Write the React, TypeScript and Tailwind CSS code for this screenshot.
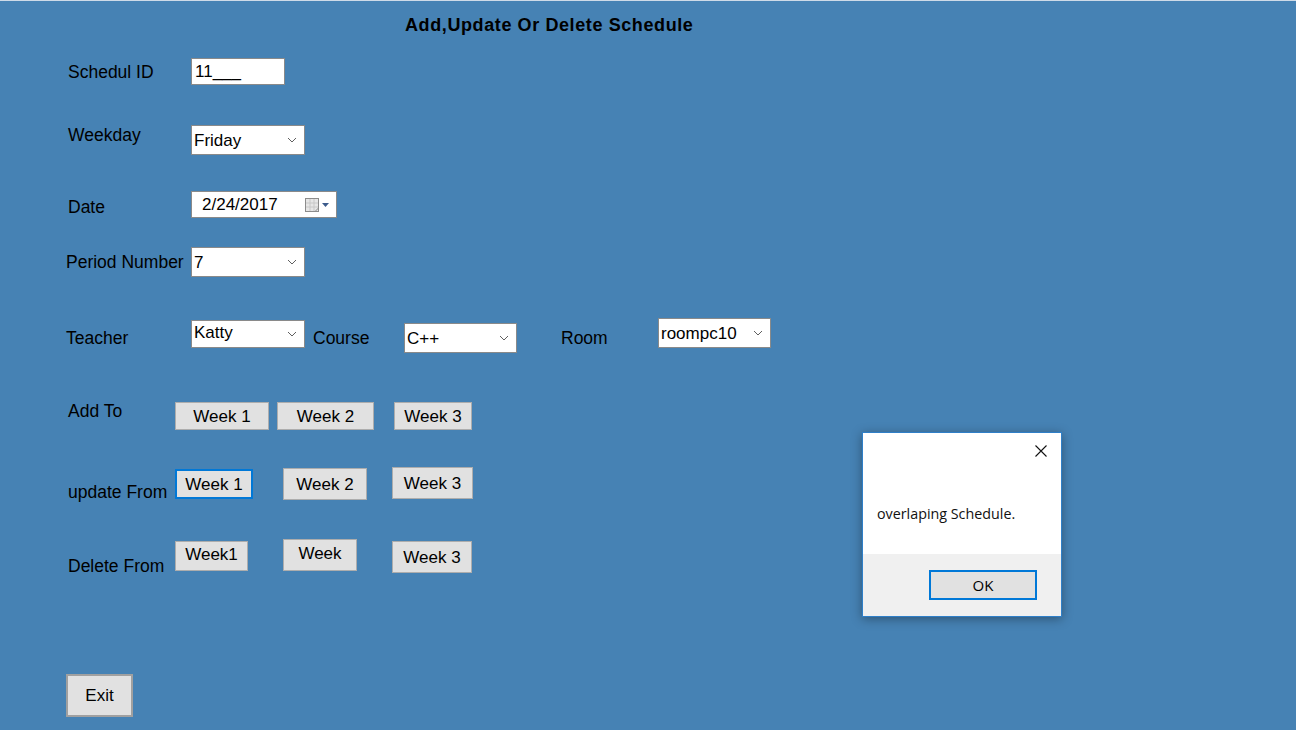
import React from 'react';

const font = { fontFamily: '"Liberation Sans", Arial, sans-serif' };

function Chevron() {
  return (
    <svg width="10" height="6" viewBox="0 0 10 6" className="shrink-0 self-center">
      <path d="M1 1 L5 5 L9 1" fill="none" stroke="#606060" strokeWidth="1" />
    </svg>
  );
}

function Combo({ value, w, h = 30, top = false, className = '' }: { value: string; w: number; h?: number; top?: boolean; className?: string }) {
  return (
    <div
      className={`flex items-center justify-between bg-white border border-[#8a8a8a] pl-[2px] pr-[7px] text-[17px] leading-none text-black ${className}`}
      style={{ width: w, height: h }}
    >
      <span className={top ? 'self-start pt-[3px]' : ''}>{value}</span>
      <Chevron />
    </div>
  );
}

function Btn({ label, w, h, focused = false, className = '' }: { label: string; w: number; h: number; focused?: boolean; className?: string }) {
  return (
    <div
      className={`flex items-center justify-center bg-[#e1e1e1] text-[17px] leading-none text-black ${
        focused ? 'border-2 border-[#0078d7]' : 'border border-[#adadad]'
      } ${className}`}
      style={{ width: w, height: h }}
    >
      {label}
    </div>
  );
}

const label = 'text-[17.5px] leading-5 text-black whitespace-nowrap';

export default function App() {
  return (
    <div className="relative w-[1296px] h-[730px] overflow-hidden bg-[#4682b4] border-t border-[#cfdbe8]" style={font}>
      {/* Title */}
      <div className="h-[57px] pt-[14px] pl-[405px] text-[18px] tracking-[0.6px] font-bold text-black leading-5">
        Add,Update Or Delete Schedule
      </div>

      {/* Schedul ID */}
      <div className="flex h-[67px] items-start">
        <span className={`ml-[68px] w-[123px] mt-[4px] ${label}`}>Schedul ID</span>
        <div className="w-[94px] h-[27px] bg-white border border-[#8a8a8a] pl-[3px] flex items-center text-[17px] leading-none text-black">
          11___
        </div>
      </div>

      {/* Weekday */}
      <div className="flex h-[66px] items-start">
        <span className={`ml-[68px] w-[123px] ${label}`}>Weekday</span>
        <Combo value="Friday" w={114} h={30} />
      </div>

      {/* Date */}
      <div className="flex h-[56px] items-start">
        <span className={`ml-[68px] w-[123px] mt-[6px] ${label}`}>Date</span>
        <div className="flex items-center justify-between w-[146px] h-[27px] bg-white border border-[#8a8a8a] pl-[10px] pr-[5px] text-[17px] leading-none text-black">
          <span>2/24/2017</span>
          <svg width="27" height="16" viewBox="0 0 27 16">
            <rect x="1.5" y="1.5" width="13" height="13" fill="#e6e6e6" stroke="#8c8c8c" />
            <path d="M6 2 V14 M10 2 V14 M2 6 H14 M2 10 H14" stroke="#c8c8c8" strokeWidth="1" />
            <path d="M14.5 11 L11 14.5" stroke="#8c8c8c" />
            <path d="M18 6 L25 6 L21.5 10 Z" fill="#3c5b8c" />
          </svg>
        </div>
      </div>

      {/* Period Number */}
      <div className="flex h-[71px] items-start">
        <span className={`ml-[66px] w-[125px] mt-[5px] ${label}`}>Period Number</span>
        <Combo value="7" w={114} h={30} />
      </div>

      {/* Teacher / Course / Room */}
      <div className="flex h-[83px] items-start">
        <span className={`ml-[66px] w-[125px] mt-[10px] ${label}`}>Teacher</span>
        <Combo value="Katty" w={114} h={28} top className="mt-[2px]" />
        <span className={`ml-[8px] w-[91px] mt-[10px] ${label}`}>Course</span>
        <Combo value="C++" w={113} h={30} className="mt-[5px]" />
        <span className={`ml-[44px] w-[97px] mt-[10px] ${label}`}>Room</span>
        <Combo value="roompc10" w={113} h={30} />
      </div>

      {/* Add To */}
      <div className="flex h-[66px] items-start">
        <span className={`ml-[68px] w-[107px] ${label}`}>Add To</span>
        <Btn label="Week 1" w={94} h={28} className="mt-[1px]" />
        <Btn label="Week 2" w={97} h={28} className="mt-[1px] ml-[8px]" />
        <Btn label="Week 3" w={78} h={28} className="mt-[1px] ml-[20px]" />
      </div>

      {/* update From */}
      <div className="flex h-[72px] items-start">
        <span className={`ml-[68px] w-[107px] mt-[15px] ${label}`}>update From</span>
        <Btn label="Week 1" w={78} h={30} focused className="mt-[2px]" />
        <Btn label="Week 2" w={84} h={32} className="mt-[1px] ml-[30px]" />
        <Btn label="Week 3" w={81} h={32} className="ml-[25px]" />
      </div>

      {/* Delete From */}
      <div className="flex h-[135px] items-start">
        <span className={`ml-[68px] w-[107px] mt-[17px] ${label}`}>Delete From</span>
        <Btn label="Week1" w={73} h={30} className="mt-[2px] !items-start pt-[4px]" />
        <Btn label="Week" w={74} h={32} className="ml-[35px] !items-start pt-[5px]" />
        <Btn label="Week 3" w={80} h={32} className="mt-[2px] ml-[35px]" />
      </div>

      {/* Exit */}
      <div className="flex">
        <Btn label="Exit" w={67} h={43} className="ml-[66px] !border-[#a0a0a0] border-2" />
      </div>

      {/* Message box */}
      <div
        className="absolute left-[862px] top-[431px] w-[200px] h-[185px] bg-white border border-[#2f7fc8] shadow-[0_2px_10px_rgba(0,0,0,0.35)] flex flex-col"
        style={{ fontFamily: '"Open Sans", "Noto Sans", sans-serif' }}
      >
        <div className="flex justify-end pt-[12px] pr-[14px] h-[40px]">
          <svg width="12" height="12" viewBox="0 0 12 12">
            <path d="M0.5 0.5 L11.5 11.5 M11.5 0.5 L0.5 11.5" stroke="#111" strokeWidth="1.1" />
          </svg>
        </div>
        <div className="flex-1 pl-[14px] pt-[31px] text-[14.3px] leading-5 text-[#111]">overlaping Schedule.</div>
        <div className="h-[62px] bg-[#f0f0f0] flex items-start pt-[16px] pl-[66px]">
          <div className="w-[108px] h-[30px] bg-[#e1e1e1] border-2 border-[#0078d7] flex items-center justify-center text-[15px] text-black">
            OK
          </div>
        </div>
      </div>
    </div>
  );
}
